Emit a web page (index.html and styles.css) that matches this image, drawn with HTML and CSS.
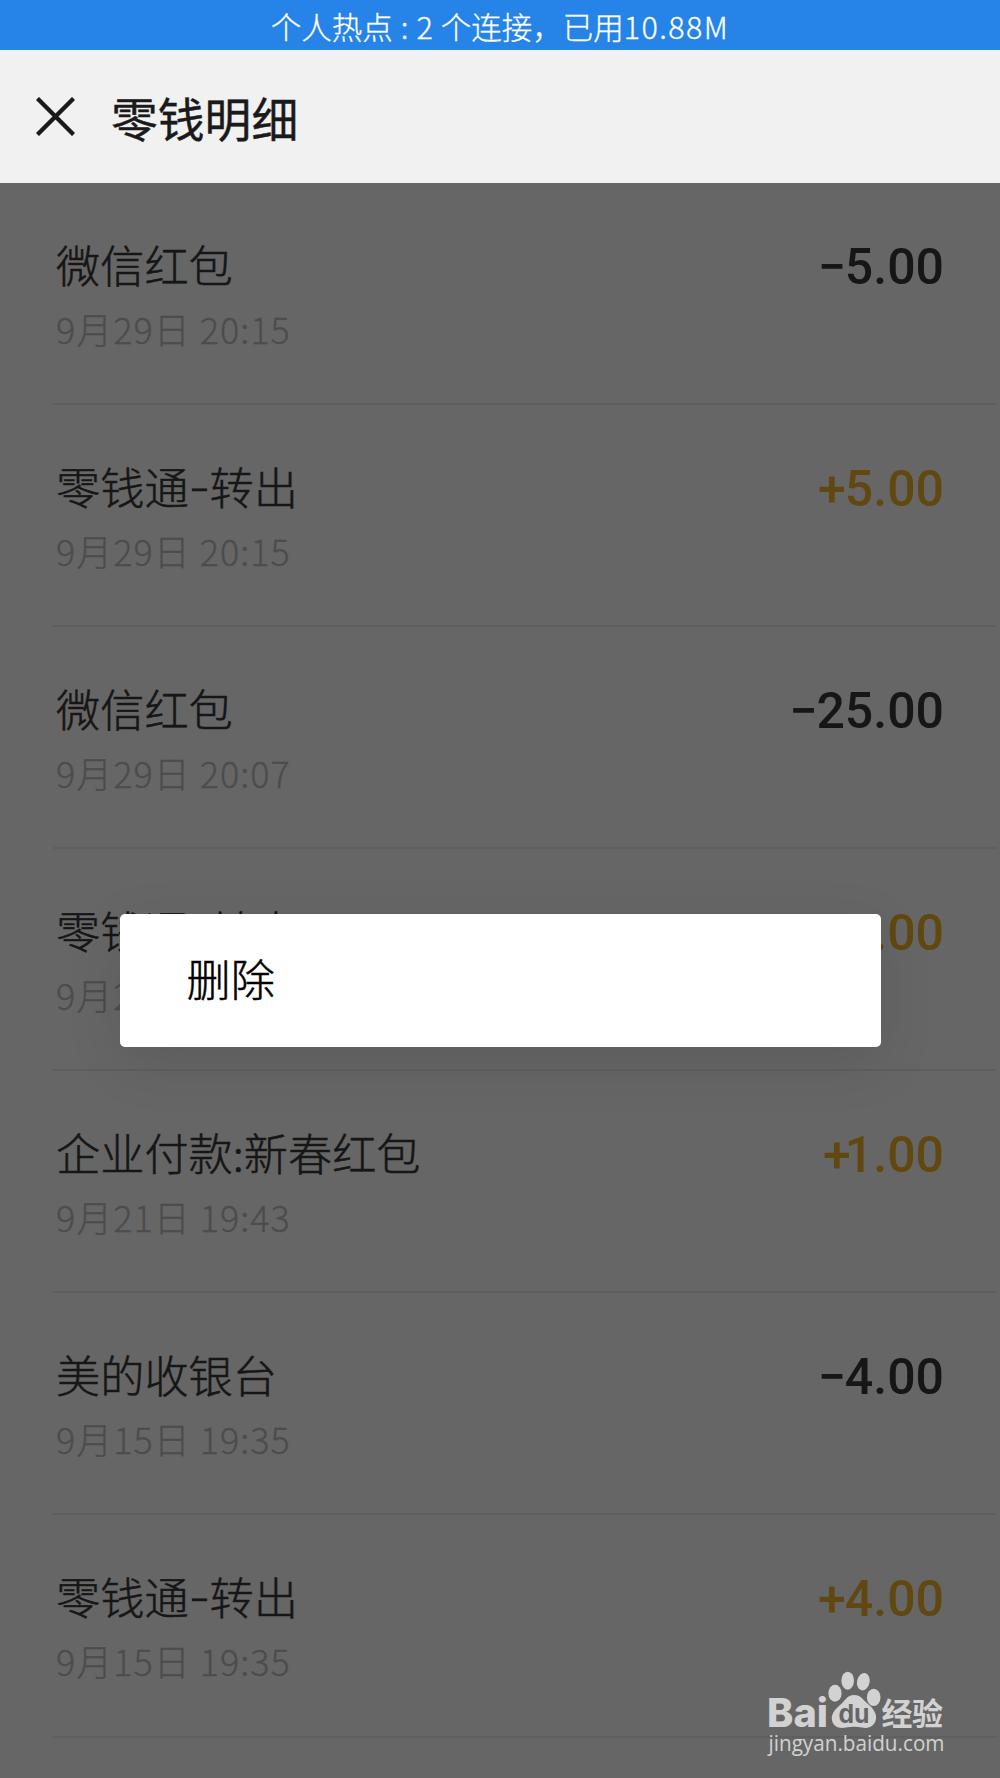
FILE: index.html
```html
<!DOCTYPE html>
<html lang="zh-CN">
<head>
  <meta charset="UTF-8" />
  <title>零钱明细</title>
  <link rel="stylesheet" href="styles.css">
</head>

<body>
  <!-- Hotspot status bar -->
  <div class="status-bar"><span>个人热点</span><span class="colon">:</span><span class="count">2</span><span>个连接，已用</span><span class="usage">10.88M</span></div>

  <!-- Title bar -->
  <header class="title-bar">
    <svg class="close-icon" viewBox="0 0 40 40">
      <path d="M1.5 1.5 L38.5 38.5 M38.5 1.5 L1.5 38.5" />
    </svg>
    <h1>零钱明细</h1>
  </header>

  <!-- Transactions -->
  <main class="list">
    <div class="row">
      <div class="info">
        <div class="name">微信红包</div>
        <div class="date">9月29日 20:15</div>
      </div>
      <div class="amount"><span class="sign">−</span>5.00</div>
    </div>
    <div class="row">
      <div class="info">
        <div class="name">零钱通<span class="dash">-</span>转出</div>
        <div class="date">9月29日 20:15</div>
      </div>
      <div class="amount income"><span class="sign">+</span>5.00</div>
    </div>
    <div class="row">
      <div class="info">
        <div class="name">微信红包</div>
        <div class="date">9月29日 20:07</div>
      </div>
      <div class="amount"><span class="sign">−</span>25.00</div>
    </div>
    <div class="row">
      <div class="info">
        <div class="name">零钱通<span class="dash">-</span>转出</div>
        <div class="date">9月29日 20:07</div>
      </div>
      <div class="amount income"><span class="sign">+</span>25.00</div>
    </div>
    <div class="row">
      <div class="info">
        <div class="name">企业付款:新春红包</div>
        <div class="date">9月21日 19:43</div>
      </div>
      <div class="amount income"><span class="sign tight">+</span>1.00</div>
    </div>
    <div class="row">
      <div class="info">
        <div class="name">美的收银台</div>
        <div class="date">9月15日 19:35</div>
      </div>
      <div class="amount"><span class="sign">−</span>4.00</div>
    </div>
    <div class="row">
      <div class="info">
        <div class="name">零钱通<span class="dash">-</span>转出</div>
        <div class="date">9月15日 19:35</div>
      </div>
      <div class="amount income"><span class="sign">+</span>4.00</div>
    </div>
    <div class="mask"></div>
  </main>

  <!-- Context menu -->
  <div class="menu">
    <div class="menu-item">删除</div>
  </div>

  <!-- Watermark -->
  <svg class="watermark" viewBox="0 0 190 100">
    <g class="paw">
      <ellipse cx="75" cy="26.3" rx="6.6" ry="8.5" />
      <ellipse cx="87.7" cy="13.7" rx="6.3" ry="9" />
      <ellipse cx="103.3" cy="14.7" rx="6.3" ry="8.8" transform="rotate(12 103.3 14.7)" />
      <ellipse cx="113.7" cy="30.3" rx="6.8" ry="8.6" />
      <path d="M94 28 C87 28 85 34 80 38 C74 43 71 48 72 53 C73 60 80 62 86 60.5 C91 59.5 97 59.5 102 60.5 C109 62 115 59 116 52 C117 47 113 41 108 37 C103 33 101 28 94 28 Z" />
    </g>
    <text class="logo" x="7" y="59.5" textLength="61" lengthAdjust="spacingAndGlyphs">Bai</text>
    <text class="du" x="78.5" y="56" textLength="31" lengthAdjust="spacingAndGlyphs">du</text>
    <text class="logo-cn" x="121.5" y="57.5" textLength="61.5">经验</text>
    <text class="site" x="8.5" y="83.5" textLength="176" lengthAdjust="spacingAndGlyphs">jingyan.baidu.com</text>
  </svg>
</body>
</html>
```
FILE: styles.css
```css
* {
  margin: 0;
  padding: 0;
  box-sizing: border-box;
}
body {
  position: relative;
  width: 1000px;
  height: 1778px;
  overflow: hidden;
  background-color: #666;
  font-family: "Noto Sans CJK SC", sans-serif;
  font-weight: 300;
}
/* Status bar */
.status-bar {
  display: flex;
  justify-content: center;
  height: 50px;
  line-height: 52px;
  background-color: #2684e9;
  color: #fff;
  font-size: 30.5px;
  -webkit-text-stroke: 0.3px #fff;
}
.colon {
  margin: 0 8px;
}
.count {
  margin-right: 8px;
}
.usage {
  letter-spacing: 1.4px;
}
/* Title bar */
.title-bar {
  display: flex;
  align-items: center;
  height: 133px;
  padding-left: 36px;
  background-color: #f1f1f1;
}
.close-icon {
  width: 39px;
  height: 39px;
  margin-right: 36px;
  fill: none;
  stroke: #1a1a1a;
  stroke-width: 4.4;
}
.title-bar h1 {
  color: #1a1a1a;
  font-size: 46.8px;
  font-weight: 400;
  line-height: 60px;
  -webkit-text-stroke: 0.4px #1a1a1a;
}
/* Transaction list */
.list {
  position: relative;
  height: 1595px;
  padding-left: 53px;
  background-color: #fff;
  overflow: hidden;
}
.row {
  display: flex;
  justify-content: space-between;
  height: 222.2px;
  margin-right: 3px;
  padding: 49px 53px 0 3px;
  border-bottom: 2px solid #eee;
}
.row:first-child {
  height: 221.5px;
}
.name {
  color: #373737;
  font-size: 44.2px;
  line-height: 65px;
  -webkit-text-stroke: 0.5px #373737;
}
.dash {
  display: inline-block;
  width: 21px;
  text-align: center;
  transform: translateY(-3px) scaleX(1.35);
}
.date {
  margin-top: 3px;
  color: #bebebe;
  font-size: 36px;
  line-height: 56px;
  letter-spacing: 1px;
  -webkit-text-stroke: 0.3px #bebebe;
}
.amount {
  color: #373737;
  font-family: Roboto, sans-serif;
  font-size: 50px;
  font-weight: 500;
  line-height: 70px;
}
.sign {
  margin-right: -1px;
}
.tight {
  margin-right: -6px;
}
.income {
  color: #f3b428;
}
.mask {
  position: absolute;
  inset: 0;
  background-color: rgba(0,0,0,0.6);
}
/* Context menu */
.menu {
  position: absolute;
  top: 914px;
  left: 119.5px;
  width: 761px;
  height: 133px;
  padding-left: 67px;
  background-color: #fff;
  border-radius: 5px;
  box-shadow: 0 16px 55px rgba(0,0,0,0.1);
}
.menu-item {
  color: #000;
  font-size: 44.2px;
  line-height: 129px;
  -webkit-text-stroke: 0.5px #000;
}
/* Watermark */
.watermark {
  position: absolute;
  top: 1667px;
  left: 760px;
  width: 190px;
  height: 100px;
  fill: #d2d2d2;
}
.logo {
  font-family: Inter, sans-serif;
  font-size: 40px;
  font-weight: 800;
}
.du {
  fill: #666;
  font-family: Inter, sans-serif;
  font-size: 26px;
  font-weight: 700;
}
.logo-cn {
  font-size: 31px;
  font-weight: 700;
}
.site {
  font-family: "Open Sans", sans-serif;
  font-size: 21.5px;
  font-weight: 500;
}
```
